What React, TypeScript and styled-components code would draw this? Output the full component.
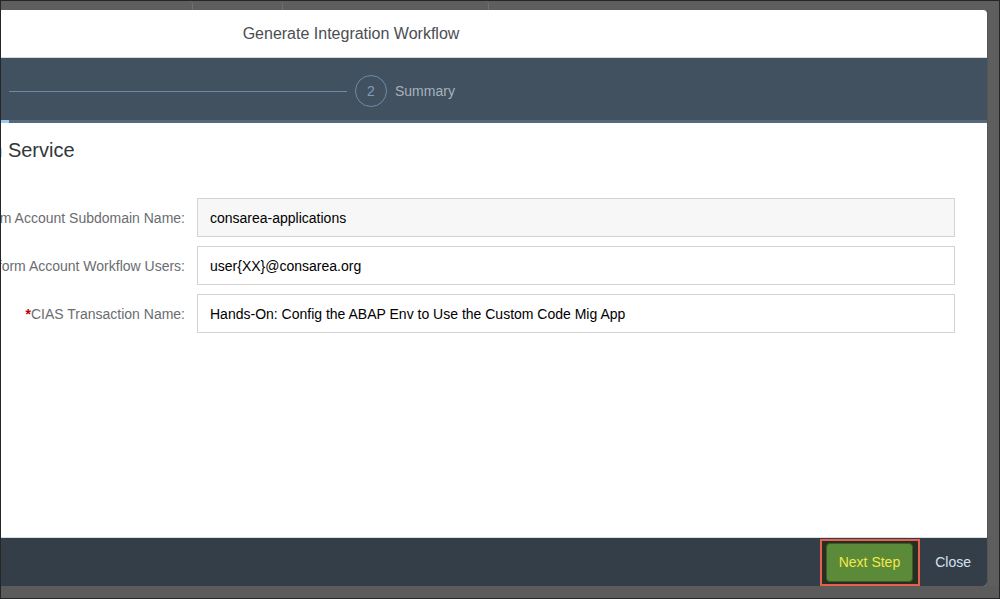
import styled, { createGlobalStyle } from 'styled-components';

const GlobalStyle = createGlobalStyle`
    html, body {
        margin: 0;
        padding: 0;
        background: #5e5e5e;
    }
    * {
        box-sizing: border-box;
    }
`;

const Page = styled.div`
    width: 1000px;
    height: 599px;
    border: 1px solid #262626;
    background: #5e5e5e;
    display: flex;
    flex-direction: column;
    font-family: 'Liberation Sans', Arial, sans-serif;
    overflow: hidden;
`;

const TopStrip = styled.div`
    height: 9px;
    display: flex;
    flex-shrink: 0;
`;

const BgTab = styled.div<{ $w: number }>`
    width: ${(p) => p.$w}px;
    border-right: 1px solid #707070;
    border-top-right-radius: 4px;
    margin-right: 2px;
`;

const Main = styled.div`
    flex: 1;
    display: flex;
    min-height: 0;
`;

// the dialog is wider than the window, it gets cut off at the left
const Viewport = styled.div`
    flex: 1;
    display: flex;
    justify-content: flex-end;
    overflow: hidden;
`;

const Gutter = styled.div`
    width: 12px;
    flex-shrink: 0;
    border-left: 1px solid #555;
`;

const BottomStrip = styled.div`
    height: 12px;
    flex-shrink: 0;
    background: #5b5b5b;
`;

const Dialog = styled.div`
    width: 1272px;
    flex-shrink: 0;
    display: flex;
    flex-direction: column;
    background: #fff;
    border-radius: 0 4px 4px 0;
    overflow: hidden;
`;

const Header = styled.header`
    height: 48px;
    flex-shrink: 0;
    display: flex;
    align-items: center;
    justify-content: center;
    border-bottom: 1px solid #d9d9d9;
    font-size: 16px;
    color: #4a4e53;
`;

const Nav = styled.nav`
    flex-shrink: 0;
    background: #425160;
`;

const Steps = styled.div`
    height: 62px;
    padding-top: 4px;
    display: grid;
    grid-template-columns: 294px 338px auto 1fr;
    align-items: center;
`;

const Step = styled.div<{ $first?: boolean }>`
    display: flex;
    align-items: center;
    justify-content: ${(p) => (p.$first ? 'flex-end' : 'flex-start')};
    gap: 8px;
    padding: ${(p) => (p.$first ? '0 20px 0 0' : '0 0 0 8px')};
`;

const StepCircle = styled.span<{ $active?: boolean }>`
    width: 32px;
    height: 32px;
    border-radius: 50%;
    border: 1px solid #6a8bad;
    background: ${(p) => (p.$active ? '#91c8f6' : 'transparent')};
    color: ${(p) => (p.$active ? '#425160' : '#7f9dbd')};
    display: flex;
    align-items: center;
    justify-content: center;
    font-size: 14px;
`;

const StepLabel = styled.span`
    font-size: 14px;
    color: #a5b1bd;
`;

const Connector = styled.div`
    height: 1px;
    background: #6a8bad;
`;

const Progress = styled.div`
    height: 3px;
    background: #56697c;
    display: flex;
`;

const ProgressFill = styled.div<{ $w: number }>`
    width: ${(p) => p.$w}px;
    background: #9cc8f2;
`;

const Body = styled.main`
    flex: 1;
    padding: 15px 32px 0 55px;
`;

const Heading = styled.h2`
    margin: 0 0 36px;
    font-size: 20px;
    line-height: 24px;
    font-weight: normal;
    color: #32363a;
`;

const Form = styled.form`
    display: grid;
    grid-template-columns: 415px 1fr;
    column-gap: 12px;
    row-gap: 9px;
`;

const Label = styled.label`
    display: flex;
    justify-content: flex-end;
    align-items: center;
    white-space: nowrap;
    overflow: hidden;
    font-size: 14px;
    color: #6a6d70;
`;

const Required = styled.span`
    color: #bb0000;
    font-weight: bold;
`;

const Input = styled.input<{ $readOnly?: boolean }>`
    height: 39px;
    padding: 0 12px;
    border: 1px solid #d3d3d3;
    border-radius: 0;
    background: ${(p) => (p.$readOnly ? '#f7f7f7' : '#fff')};
    font-family: inherit;
    font-size: 14px;
    color: #000;
    outline: none;
`;

const Footer = styled.footer`
    height: 49px;
    flex-shrink: 0;
    border-top: 1px solid #d6dee8;
    background: #343e48;
    display: flex;
    align-items: center;
    justify-content: flex-end;
    padding-right: 6px;
`;

// red box drawn round the button in the screenshot
const Highlight = styled.span`
    display: inline-flex;
    border: 2px solid #e6604c;
    padding: 2px 5px 2px 4px;
    background: #262f22;
`;

const PrimaryButton = styled.button`
    height: 39px;
    padding: 0 12px;
    min-width: 87px;
    border: 1px solid #3e5a26;
    border-radius: 4px;
    background: #5b8a38;
    color: #f2e84a;
    font-family: inherit;
    font-size: 14px;
    cursor: pointer;
`;

const GhostButton = styled.button`
    height: 36px;
    margin-left: 5px;
    padding: 0 10px;
    border: none;
    background: transparent;
    color: #d3e2f2;
    font-family: inherit;
    font-size: 14px;
    cursor: pointer;
`;

const App = () => {
    return (
        <>
            <GlobalStyle />
            <Page>
                <TopStrip>
                    <BgTab $w={192} />
                    <BgTab $w={88} />
                    <BgTab $w={204} />
                </TopStrip>
                <Main>
                    <Viewport>
                        <Dialog>
                            <Header>Generate Integration Workflow</Header>
                            <Nav>
                                <Steps>
                                    <Step $first>
                                        <StepCircle $active>1</StepCircle>
                                        <StepLabel>Integration Service</StepLabel>
                                    </Step>
                                    <Connector />
                                    <Step>
                                        <StepCircle>2</StepCircle>
                                        <StepLabel>Summary</StepLabel>
                                    </Step>
                                    <div />
                                </Steps>
                                <Progress>
                                    <ProgressFill $w={294} />
                                </Progress>
                            </Nav>
                            <Body>
                                <Heading>Cloud Platform Integration Service</Heading>
                                <Form>
                                    <Label>SAP Cloud Platform Account Subdomain Name:</Label>
                                    <Input $readOnly readOnly value="consarea-applications" />
                                    <Label>SAP Cloud Platform Account Workflow Users:</Label>
                                    <Input readOnly value="user{XX}@consarea.org" />
                                    <Label>
                                        <Required>*</Required>CIAS Transaction Name:
                                    </Label>
                                    <Input
                                        readOnly
                                        value="Hands-On: Config the ABAP Env to Use the Custom Code Mig App"
                                    />
                                </Form>
                            </Body>
                            <Footer>
                                <Highlight>
                                    <PrimaryButton type="button">Next Step</PrimaryButton>
                                </Highlight>
                                <GhostButton type="button">Close</GhostButton>
                            </Footer>
                        </Dialog>
                    </Viewport>
                    <Gutter />
                </Main>
                <BottomStrip />
            </Page>
        </>
    );
};

export default App;
